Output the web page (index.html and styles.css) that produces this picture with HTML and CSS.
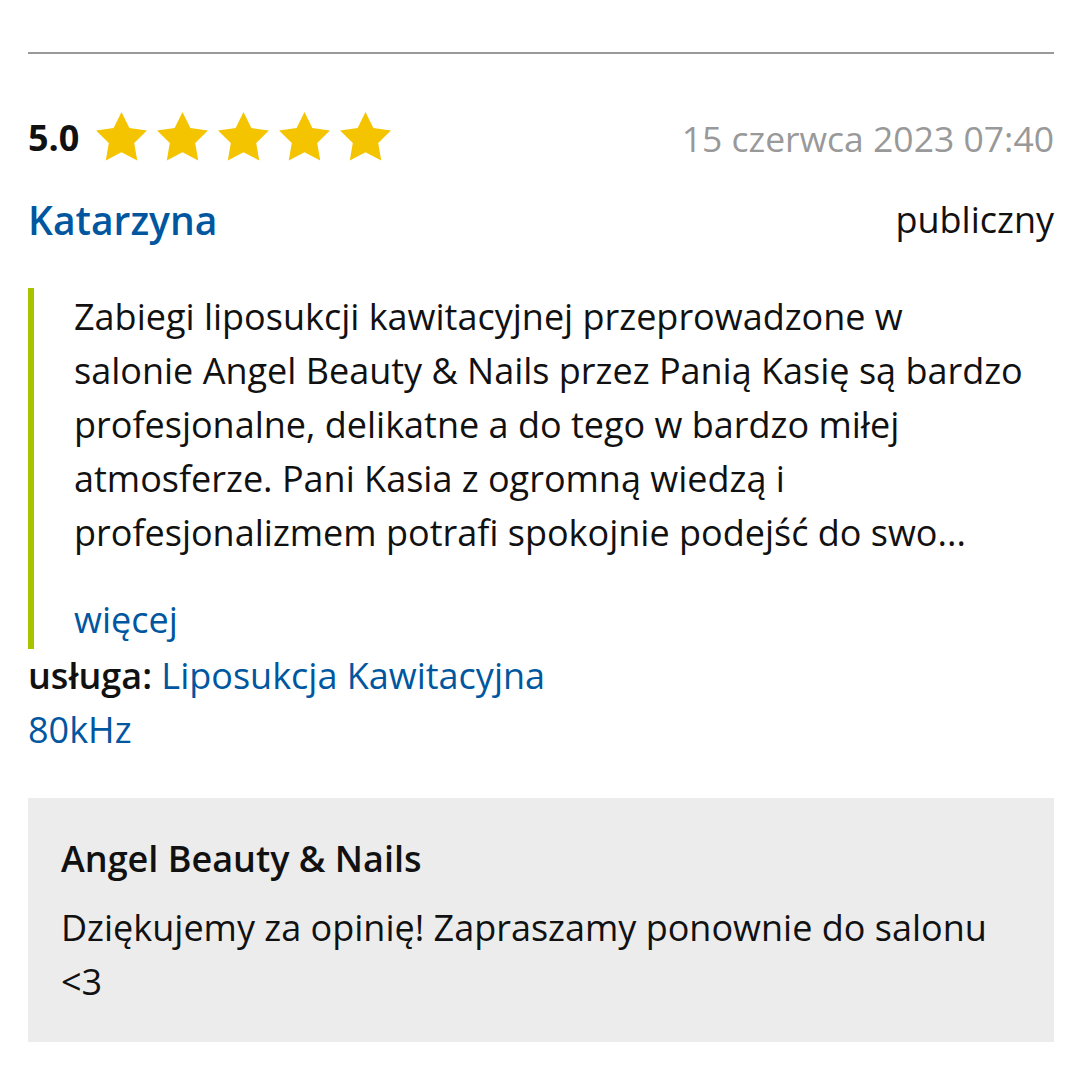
FILE: index.html
```html
<!doctype html>
<html lang="pl">
<head>
    <meta charset="UTF-8">
    <title>Opinia</title>
    <link rel="stylesheet" href="styles.css">
</head>
<body>

    <div class="review">
        <div class="review-head">
            <div class="rating">
                <span class="score">5.0</span>
                <span class="stars">
                    <svg viewBox="0 0 24 24"><path d="M12 2l3.09 6.26L22 9.27l-5 4.87 1.18 6.88L12 17.77l-6.18 3.25L7 14.14 2 9.27l6.91-1.01L12 2z"/></svg>
                    <svg viewBox="0 0 24 24"><path d="M12 2l3.09 6.26L22 9.27l-5 4.87 1.18 6.88L12 17.77l-6.18 3.25L7 14.14 2 9.27l6.91-1.01L12 2z"/></svg>
                    <svg viewBox="0 0 24 24"><path d="M12 2l3.09 6.26L22 9.27l-5 4.87 1.18 6.88L12 17.77l-6.18 3.25L7 14.14 2 9.27l6.91-1.01L12 2z"/></svg>
                    <svg viewBox="0 0 24 24"><path d="M12 2l3.09 6.26L22 9.27l-5 4.87 1.18 6.88L12 17.77l-6.18 3.25L7 14.14 2 9.27l6.91-1.01L12 2z"/></svg>
                    <svg viewBox="0 0 24 24"><path d="M12 2l3.09 6.26L22 9.27l-5 4.87 1.18 6.88L12 17.77l-6.18 3.25L7 14.14 2 9.27l6.91-1.01L12 2z"/></svg>
                </span>
            </div>
            <div class="date">15 czerwca 2023 07:40</div>
        </div>

        <div class="review-author">
            <a href="javascript:void(0)" class="author">Katarzyna</a>
            <span class="visibility">publiczny</span>
        </div>

        <blockquote class="review-text">
            <p>Zabiegi liposukcji kawitacyjnej przeprowadzone w<br>
            salonie Angel Beauty &amp; Nails przez Panią Kasię są bardzo<br>
            profesjonalne, delikatne a do tego w bardzo miłej<br>
            atmosferze. Pani Kasia z ogromną wiedzą i<br>
            profesjonalizmem potrafi spokojnie podejść do swo...</p>
            <a href="javascript:void(0)" class="more">więcej</a>
        </blockquote>

        <div class="service">
            <b>usługa:</b> <a href="javascript:void(0)">Liposukcja Kawitacyjna 80kHz</a>
        </div>

        <div class="reply">
            <h3>Angel Beauty &amp; Nails</h3>
            <p>Dziękujemy za opinię! Zapraszamy ponownie do salonu &lt;3</p>
        </div>
    </div>

</body>
</html>
```

FILE: styles.css
```css
*{
    padding: 0;
    margin: 0;
}
body{
    font-family: "Open Sans", "Liberation Sans", sans-serif;
    font-size: 36px;
    line-height: 54px;
    color: #111;
    background-color: #fff;
}
a{
    text-decoration: none;
    color: #0057a0;
}
.review{
    margin: 0 26px 0 28px;
    padding-top: 52px;
}
.review-head{
    display: flex;
    justify-content: space-between;
    align-items: center;
    border-top: 2px solid #999;
    padding-top: 53px;
}
.rating{
    display: flex;
    align-items: center;
    gap: 12px;
}
.score{
    font-weight: 700;
    color: #111;
}
.stars{
    display: flex;
}
.stars svg{
    width: 61px;
    height: 61px;
    fill: #f5c400;
}
.date{
    color: #999;
    font-size: 35.5px;
}
.review-author{
    display: flex;
    justify-content: space-between;
    align-items: center;
    height: 54px;
    margin-top: 25px;
}
.author{
    font-size: 39px;
    font-weight: 600;
}
.review-text{
    margin-top: 41px;
    border-left: 6px solid #a8c400;
    padding: 0 0 2px 40px;
}
.review-text p{
    padding-top: 2px;
}
.review-text .more{
    display: block;
    margin-top: 33px;
}
.service{
    max-width: 560px;
}
.service b{
    font-weight: 600;
}
.reply{
    margin-top: 41px;
    background-color: #ececec;
    padding: 34px 33px 33px;
}
.reply h3{
    font-size: 36px;
    font-weight: 600;
}
.reply p{
    margin-top: 15px;
}
```
